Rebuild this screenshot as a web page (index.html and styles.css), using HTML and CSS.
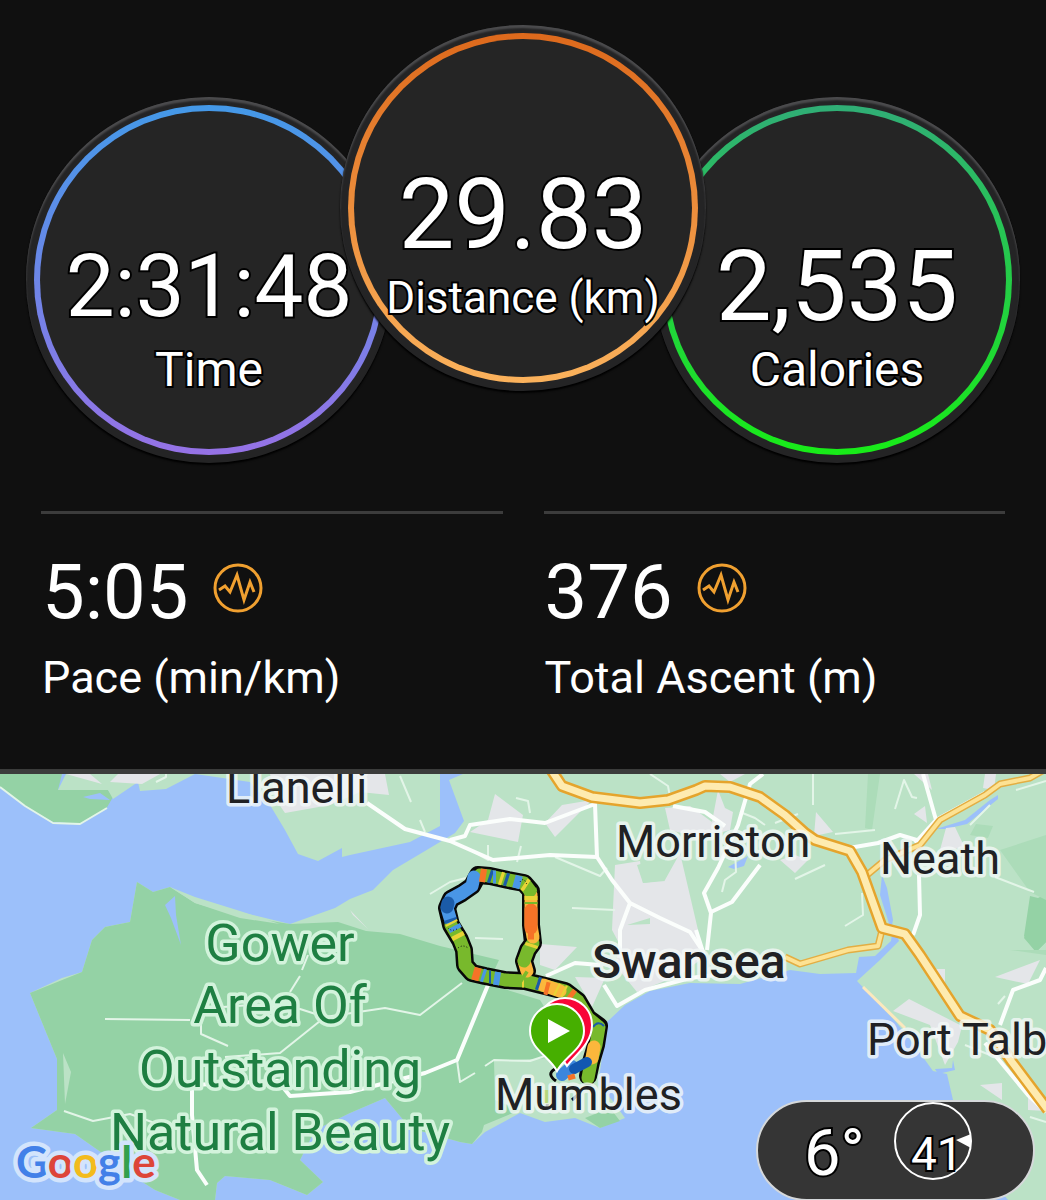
FILE: index.html
```html
<!DOCTYPE html>
<html lang="en">
<head>
  <meta charset="UTF-8">
  <meta name="viewport" content="width=device-width, initial-scale=1">
  <title>Run summary</title>
  <link rel="stylesheet" href="styles.css">
</head>
<body>

  <main class="activity">
    <section class="dials">
      <div class="dial dial-time">
        <div class="dial-ring">
          <span class="dial-value dial-value-small">2:31:48</span>
          <span class="dial-label">Time</span>
        </div>
      </div>
      <div class="dial dial-distance">
        <div class="dial-ring">
          <span class="dial-value">29.83</span>
          <span class="dial-label">Distance (km)</span>
        </div>
      </div>
      <div class="dial dial-calories">
        <div class="dial-ring">
          <span class="dial-value">2,535</span>
          <span class="dial-label">Calories</span>
        </div>
      </div>
    </section>

    <section class="stats">
      <div class="stat">
        <div class="stat-row">
          <span class="stat-value">5:05</span>
          <svg class="stat-icon" viewBox="0 0 50 50" aria-hidden="true">
            <circle cx="25" cy="25" r="23"/>
            <path d="M6 27 L12 23 L17 29 L24 12 L31 37 L37 19 L41 29"/>
          </svg>
        </div>
        <div class="stat-label">Pace (min/km)</div>
      </div>
      <div class="stat">
        <div class="stat-row">
          <span class="stat-value">376</span>
          <svg class="stat-icon" viewBox="0 0 50 50" aria-hidden="true">
            <circle cx="25" cy="25" r="23"/>
            <path d="M6 27 L12 23 L17 29 L24 12 L31 37 L37 19 L41 29"/>
          </svg>
        </div>
        <div class="stat-label">Total Ascent (m)</div>
      </div>
    </section>

    <section class="map">
      <svg class="map-canvas" viewBox="0 774 1046 426" role="img" aria-label="Route map">
        <!-- land -->
        <g class="land">
          <path d="M195 774 L250 782 L270 805 L285 830 L298 854 L318 861 L342 848 L342 857 L350 855 L410 842 L440 826 L440 774Z"/>
          <path d="M463 774 L449 780 L464 821 L455 833 L425 851 L393 870 L373 890 L350 899 L335 908 L290 924 L240 912 L195 902 L170 887 L153 892 L137 882 L130 922 L105 927 L92 940 L82 972 L62 978 L30 993 L57 1059 L57 1110 L31 1128 L75 1134 L105 1155 L130 1174 L155 1190 L180 1200 L215 1200 L217 1183 L225 1176 L270 1180 L307 1195 L323 1182 L300 1160 L315 1130 L350 1113 L385 1098 L395 1110 L410 1128 L460 1142 L472 1144 L485 1132 L520 1113 L545 1122 L575 1118 L600 1128 L625 1118 L612 1100 L598 1085 L607 1022 L625 1005 L650 991 L690 983 L740 984 L790 970 L820 974 L856 973 L859 957 L875 956 L891 941 L893 928 L899 941 L880 960 L857 981 L896 1022 L912 1042 L933 1071 L947 1074 L953 1100 L1000 1190 L1008 1200 L1046 1200 L1046 774Z"/>
        </g>
        <g class="park">
          <path d="M0 774 L62 774 L58 790 L108 790 L113 797 L106 809 L80 824 L53 822 L25 806 L0 787Z"/>
          <path d="M290 924 L240 916 L195 903 L170 887 L153 892 L137 882 L130 922 L105 927 L92 940 L82 972 L30 993 L57 1059 L57 1110 L31 1128 L75 1134 L105 1155 L130 1174 L155 1190 L180 1200 L215 1200 L217 1183 L225 1176 L270 1180 L307 1195 L323 1182 L300 1160 L315 1130 L350 1113 L385 1098 L395 1110 L410 1128 L460 1142 L472 1144 L482 1132 L484 1125 L520 1110 L495 1100 L494 1061 L550 1058 L565 1040 L540 1000 L488 984 L499 960 L440 946 L400 934 L366 931 L338 922Z"/>
          <path d="M1030 925 L1046 918 L1046 942 L1036 952 L1024 938Z"/>
          <path d="M1030 896 L1038 898 L1046 894 L1046 942 L1036 952 L1024 936Z"/>
          <path d="M585 1118 L610 1108 L620 1121 L600 1128Z"/>
        </g>
        <path class="park-soft" d="M1000 850 L1046 835 L1046 900 L1030 892Z M976 824 L993 826 L988 838 L970 835Z M868 774 L880 774 L872 830 L865 828Z M1010 950 L1046 955 L1046 950Z"/>
        <path class="water" d="M175 896 L165 905 L171 918 L181 945 L176 915Z M83 797 L100 793 L110 800 L90 799Z M728 867 L748 856 L744 866 L734 869Z M882 875 L887 888 L893 920 L891 930 L880 895Z M935 1069 L952 1068 L953 1060 L955 1070 L938 1074Z M936 829 L965 820 L990 800 L998 795 L998 799 L967 824 L945 829Z"/>
        <path class="land" d="M58 790 L66 774 L195 774 L166 789 L140 791 L138 782 L113 799 L108 790Z M63 1053 L71 1072 L65 1104Z M170 887 L195 897 L240 911 L280 924 L240 918 L195 903Z"/>

        <!-- built-up areas -->
        <path class="urban" d="M66 774 L90 774 L102 784Z M118 774 L160 774 L142 784 L110 782Z M270 774 L385 774 L389 795 L360 792 L330 805 L285 813 L276 800Z M495 794 L523 815 L518 842 L470 832 L488 820Z M545 823 L562 805 L592 800 L555 837Z M615 865 L640 861 L643 883 L665 880 L680 853 L698 930 L700 960 L680 975 L637 992 L615 965 L620 945 L612 930Z M540 944 L577 947 L555 970 L540 965Z M575 977 L605 978 L592 1007Z M665 808 L690 806 L712 822 L718 790 L725 808 L733 812 L730 830 L700 838 L670 830Z M816 812 L833 832 L814 836Z M780 860 L795 855 L808 860 L795 873Z M914 814 L925 806 L927 823Z M914 774 L928 774 L932 790Z M946 828 L955 827 L965 848 L940 850Z M985 774 L996 774 L994 790 L983 788Z M995 977 L1040 960 L1028 984Z M927 969 L945 969 L945 987Z M893 1011 L909 999 L962 1026 L958 1042 L945 1065 L930 1025Z M980 1085 L1002 1083 L1002 1100Z M1028 1088 L1046 1100 L1046 1111 L1028 1110Z M350 910 L368 929 L353 915Z M720 774 L745 774 L730 782Z"/>
        <path class="land" d="M627 925 L650 918 L650 924Z M637 865 L643 883 L665 881 L655 860Z"/>

        <!-- minor roads -->
        <path class="lane" d="M105 1019 L190 1020 M201 1022 L201 1034 L228 1046 M308 955 L302 970 M300 976 L290 992 M210 1008 L250 1005 L300 1009 L325 1017 L280 1053 L225 1057 M325 1017 L385 1008 L420 1015 L462 983 M64 1111 L93 1121 L130 1114 L160 1125 L190 1130 M457 1060 L460 1082 L475 1073 M485 1066 L494 1060 L530 1061 L545 1056 M430 894 L450 882 L466 878 M475 938 L503 939 M572 908 L615 910 M400 776 L411 802 M420 820 L425 832 M516 798 L528 801 L530 813 M470 850 L488 860 L488 845 M521 846 L517 862 M555 857 L600 876 L607 868 M650 774 L668 786 L670 797 M813 774 L813 805 M835 834 L875 830 M895 809 L904 780 L912 797 L917 798 M795 879 L825 865 M862 893 L863 915 L845 926 M740 812 L755 818 L765 825 M775 823 L798 814 M735 850 L736 872 L725 880 L722 892 M970 825 L990 805 M1016 790 L1046 781 M995 877 L1034 892 M998 1004 L1005 996 M965 1045 L990 1055 M1030 1117 L1046 1122 M156 782 L166 777 L166 774 M0 787 L25 806 L53 823 L80 824 L107 808 M570 1045 L583 1050"/>

        <!-- main roads -->
        <path class="road" d="M367 803 L405 829 L450 841 L493 860 L550 855 L597 857 L612 880 L630 903 L660 918 L690 932 L702 950 M450 840 L465 836 L470 825 L510 819 L545 823 L595 804 L597 857 M630 903 L620 930 L620 950 M546 976 L575 963 L600 965 M604 985 L617 1006 L645 990 L690 978 L740 972 M488 985 L457 1060 L425 1073 L350 1092 L290 1096 L278 1081 L192 1085 L192 1115 L197 1170 L207 1185"/>
        <path class="road" d="M763 774 L750 784 L738 825 L718 868 L704 893 L711 913 L707 950 M760 865 L732 902 L711 912 M673 806 L705 812 L725 826 M849 848 L878 843 L900 835 L920 841 M923 774 L936 820 L915 843 M936 820 L985 793 M919 875 L920 915 L913 935 M1046 968 L1040 980 L1013 990 L1000 1025 M985 1043 L1028 1095 L1046 1112 M696 930 L704 955"/>

        <!-- A roads and motorway -->
        <path class="aroad-edge" d="M867 875 L885 860 L920 845 L940 820 L985 795 L1000 784 L1030 778 L1044 770 M785 957 L800 964 L848 950 L878 946 L882 930"/>
        <path class="aroad" d="M867 875 L885 860 L920 845 L940 820 L985 795 L1000 784 L1030 778 L1044 770 M785 957 L800 964 L848 950 L878 946 L882 930"/>
        <path class="motorway-edge" d="M550 768 L562 786 L592 797 L640 803 L668 800 L696 790 L705 786 L730 787 L760 797 L785 815 L805 833 L815 840 L850 851 L862 872 L882 928 L905 934 L920 955 L960 1016 L990 1030 L1012 1062 L1048 1110"/>
        <path class="motorway" d="M550 768 L562 786 L592 797 L640 803 L668 800 L696 790 L705 786 L730 787 L760 797 L785 815 L805 833 L815 840 L850 851 L862 872 L882 928 L905 934 L920 955 L960 1016 L990 1030 L1012 1062 L1048 1110"/>
        <path class="beach" d="M863 987 L905 1028"/>

        <!-- recorded track, coloured by pace -->
        <path class="track-edge" d="M527 971 L524 961 L528 950 L533 943 L531 925 L531 905 L531 891 L524 883 L508 880 L490 876 L478 875 L472 886 L462 893 L451 899 L447 908 L451 925 L460 940 L464 950 L465 965 L472 973 L485 976 L505 980 L525 981 L545 986 L565 991 L578 1001 L588 1018 L599 1026 L596 1045 L591 1062 L588 1076"/>
        <path class="track-edge-thin" d="M555 1069 Q546 1074 556 1081 M580 1093 L572 1100 M548 1092 L547 1110"/>
        <g class="track">
          <path class="green" d="M588 1078 L591 1062 L596 1045 L599 1027 L588 1018 L578 1001 L565 991 L545 986 L525 981 L505 980 L485 976 L472 973 L465 965 L464 950 L460 940 L451 925"/>
          <path class="amber" d="M527 971 L524 961"/>
          <path class="green" d="M524 961 L528 950 L533 943"/>
          <path class="amber" d="M533 937 L531 925 L531 895"/>
          <path class="orange" d="M531 928 L531 910"/>
          <path class="green" d="M530 891 L524 883 L508 880 L490 876 L480 875"/>
          <path class="blue" d="M474 877 L472 886 L462 893 L451 899 L447 908 L450 918"/>
          <path class="navy" d="M448 903 L447 907"/>
          <path class="amber" d="M594 1047 L592 1058"/>
          <path class="amber" d="M543 985 L560 991"/>
        </g>
        <g class="bands">
          <path class="orange" d="M480 875 L486 876 M528 933 L534 933 M473 973 L480 975 M569 994 L573 997 M545 988 L549 989"/>
          <path class="navy" d="M489 876 L492 877 M505 879 L508 880 M450 919 L451 922 M537 983 L540 984 M489 977 L491 977"/>
          <path class="blue" d="M493 877 L496 877 M514 881 L521 883 M454 926 L456 930 M482 975 L485 976 M494 978 L500 979"/>
          <path class="yellow" d="M500 878 L503 879 M524 884 L527 886 M531 896 L531 900 M451 922 L452 924 M457 934 L459 938 M522 981 L524 981 M532 944 L531 947 M556 989 L558 990 M563 991 L565 992"/>
          <path class="green" d="M530 889 L531 893 M522 976 L525 978 M531 902 L531 904"/>
        </g>
        <path class="track-dots" d="M458 948 Q463 944 468 948 M520 882 Q524 876 527 885 M457 929 Q452 932 448 928"/>
        <path class="track-arc" d="M593 1027 Q598 1020 604 1026"/>
        <path class="line-blue" d="M562 1075 L572 1066"/>
        <path class="line-navy" d="M574 1069 L587 1062"/>
        <path class="line-orange" d="M568 1078 L575 1076"/>
        <path class="line-faint" d="M547 1090 L547 1104"/>

        <!-- finish and start pins -->
        <path class="pin pin-finish" d="M567 1066 C558 1050 538 1042 538 1025 A27 27 0 0 1 592 1025 C592 1044 575 1055 567 1066Z"/>
        <path class="pin pin-start" d="M557 1071 C549 1056 530 1049 530 1031 A27 27 0 0 1 584 1031 C584 1049 565 1056 557 1071Z"/>
        <path class="pin-play" d="M548 1019 L570 1031 L548 1043Z"/>

        <!-- place names -->
        <g class="place">
          <text x="226" y="803">Llanelli</text>
          <text x="616" y="857">Morriston</text>
          <text x="880" y="874">Neath</text>
          <text class="place-city" x="592" y="978">Swansea</text>
          <text x="867" y="1055">Port Talbot</text>
          <text x="495" y="1110">Mumbles</text>
        </g>
        <g class="area-name">
          <text x="280" y="961">Gower</text>
          <text x="280" y="1023">Area Of</text>
          <text x="280" y="1087">Outstanding</text>
          <text x="280" y="1150">Natural Beauty</text>
        </g>
        <text class="google" x="16" y="1178"><tspan class="g-blue">G</tspan><tspan class="g-red">o</tspan><tspan class="g-yellow">o</tspan><tspan class="g-blue">g</tspan><tspan class="g-green">l</tspan><tspan class="g-red">e</tspan></text>
      </svg>

      <div class="weather">
        <span class="weather-temp">6°</span>
        <span class="wind">
          <svg class="wind-dial" viewBox="0 0 78 78" aria-hidden="true">
            <circle cx="39" cy="39" r="38"/>
            <path d="M62 38 L77 32 V46Z"/>
          </svg>
          <span class="wind-speed">41</span>
        </span>
      </div>
    </section>
  </main>

</body>
</html>
```

FILE: styles.css
```css
* {
  box-sizing: border-box;
}

body {
  margin: 0;
  background: #101010;
  color: #fff;
  font-family: Roboto, "Liberation Sans", sans-serif;
}

/* dials */

.dials {
  display: flex;
  justify-content: center;
  align-items: flex-start;
  padding-top: 25px;
}

.dial {
  flex: none;
  width: 366px;
  height: 366px;
  padding: 8px;
  border-radius: 50%;
  background: #242425;
  box-shadow: inset 0 3px 2px #4c4c4e, 0 2px 2px #000;
}

.dial-time,
.dial-calories {
  margin-top: 72px;
}

.dial-distance {
  position: relative;
  margin: 0 -52px;
}

.dial-ring {
  display: flex;
  flex-direction: column;
  align-items: center;
  height: 100%;
  padding-top: 130px;
  border: 6px solid transparent;
  border-radius: 50%;
  white-space: nowrap;
}

.dial-time .dial-ring {
  background: linear-gradient(#252525, #252525) padding-box, linear-gradient(#4499e8, #9672e6) border-box;
}

.dial-distance .dial-ring {
  background: linear-gradient(#252525, #252525) padding-box, linear-gradient(#dd691c, #fbb25c) border-box;
}

.dial-calories .dial-ring {
  background: linear-gradient(#252525, #252525) padding-box, linear-gradient(#30ae76, #18ec18) border-box;
}

.dial-value,
.dial-label,
.weather {
  -webkit-text-stroke: 4px #000;
  paint-order: stroke fill;
}

.dial-value {
  height: 100px;
  font-size: 99px;
  line-height: 90px;
}

.dial-value-small {
  font-size: 87px;
}

.dial-label {
  font-size: 48px;
  line-height: 58px;
}

.dial-distance .dial-label {
  font-size: 44px;
}

/* stats */

.stats {
  display: grid;
  grid-template-columns: 1fr 1fr;
  gap: 41px;
  padding: 48px 41px 63px;
}

.stat {
  padding: 32px 0 0 1px;
  border-top: 3px solid #3c3c3c;
}

.stat-row {
  display: flex;
  align-items: flex-start;
  gap: 24px;
  height: 90px;
}

.stat-value {
  font-size: 76px;
  line-height: 92px;
}

.stat-icon {
  width: 50px;
  height: 50px;
  margin-top: 17px;
  fill: none;
  stroke: #f0a030;
  stroke-width: 3;
  stroke-linejoin: miter;
}

.stat-label {
  margin-top: 14px;
  font-size: 45px;
  line-height: 56px;
}

/* map */

.map {
  position: relative;
  border-top: 5px solid #3b3c3b;
}

.map-canvas {
  display: block;
  width: 100%;
  height: auto;
  background: #9cc0fa;
}

.water {
  fill: #9cc0fa;
}

.land {
  fill: #bbe2c6;
}

.park {
  fill: #94d2a5;
}

.park-soft {
  fill: #acdcb9;
}

.urban {
  fill: #e4e6e9;
}

.lane,
.road,
.aroad,
.aroad-edge,
.motorway,
.motorway-edge,
.beach,
.track-edge,
.track-edge-thin,
.track path,
.bands path,
.track-dots,
.track-arc,
.line-blue,
.line-navy,
.line-orange,
.line-faint {
  fill: none;
  stroke-linejoin: round;
}

.lane {
  stroke: #e3f5e8;
  stroke-width: 2;
}

.road {
  stroke: #fbfefc;
  stroke-width: 4;
}

.aroad-edge {
  stroke: #e3ae43;
  stroke-width: 7;
}

.aroad {
  stroke: #fde293;
  stroke-width: 4;
}

.motorway-edge {
  stroke: #e5a42c;
  stroke-width: 12;
}

.motorway {
  stroke: #feebb0;
  stroke-width: 7;
}

.beach {
  stroke: #fbe8bd;
  stroke-width: 3;
}

.track-edge {
  stroke: #080808;
  stroke-width: 18;
  stroke-linecap: round;
}

.track-edge-thin {
  stroke: #080808;
  stroke-width: 3;
}

.track path {
  stroke-width: 13;
  stroke-linecap: round;
}

.bands path {
  stroke-width: 13;
}

.track .green,
.bands .green {
  stroke: #78b92c;
}

.track .amber {
  stroke: #fbb73c;
}

.track .orange,
.bands .orange {
  stroke: #f67327;
}

.track .blue,
.bands .blue {
  stroke: #4996e6;
}

.track .navy,
.bands .navy {
  stroke: #1b5ba8;
}

.bands .yellow {
  stroke: #e9d335;
}

.track-dots {
  stroke: #111;
  stroke-width: 1;
  stroke-dasharray: 1 2;
}

.track-arc {
  stroke: #1b5ba8;
  stroke-width: 2;
}

.line-blue {
  stroke: #3c86dc;
  stroke-width: 12;
  stroke-linecap: round;
}

.line-navy {
  stroke: #1257b0;
  stroke-width: 10;
  stroke-linecap: round;
}

.line-orange {
  stroke: #f67327;
  stroke-width: 5;
}

.line-faint {
  stroke: #b5d77c;
  stroke-width: 8;
}

.pin {
  stroke: #fff;
  stroke-width: 2;
}

.pin-finish {
  fill: #f80637;
}

.pin-start {
  fill: #46af00;
}

.pin-play {
  fill: #fff;
}

.place,
.area-name,
.google {
  paint-order: stroke fill;
  stroke-linejoin: round;
}

.place {
  fill: #202124;
  stroke: rgba(244, 249, 248, 0.8);
  stroke-width: 7px;
  font-size: 45px;
}

.place-city {
  font-size: 48px;
  font-weight: 500;
}

.area-name {
  fill: #1e7f42;
  stroke: #d3f3dc;
  stroke-width: 7px;
  font-size: 52px;
  text-anchor: middle;
}

.google {
  stroke: #d3e4fc;
  stroke-width: 9px;
  font-family: Lato, Roboto, sans-serif;
  font-size: 44px;
  font-weight: 700;
}

.g-blue {
  fill: #4280e8;
}

.g-red {
  fill: #dd4539;
}

.g-yellow {
  fill: #f3bb1c;
}

.g-green {
  fill: #34a04e;
}

/* weather pill */

.weather {
  position: absolute;
  right: 11px;
  bottom: -1px;
  display: flex;
  gap: 29px;
  width: 279px;
  height: 101px;
  padding-left: 46px;
  border: 2px solid #d5d8da;
  border-radius: 51px;
  background: #353535;
}

.weather-temp {
  font-size: 65px;
  line-height: 102px;
}

.wind {
  display: grid;
  width: 78px;
  height: 78px;
}

.wind-dial,
.wind-speed {
  grid-area: 1 / 1;
}

.wind-dial circle {
  fill: none;
  stroke: #fff;
  stroke-width: 2;
}

.wind-dial path {
  fill: #fff;
}

.wind-speed {
  padding: 24px 0 0 8px;
  font-size: 46px;
  line-height: 56px;
  text-align: center;
}
```
